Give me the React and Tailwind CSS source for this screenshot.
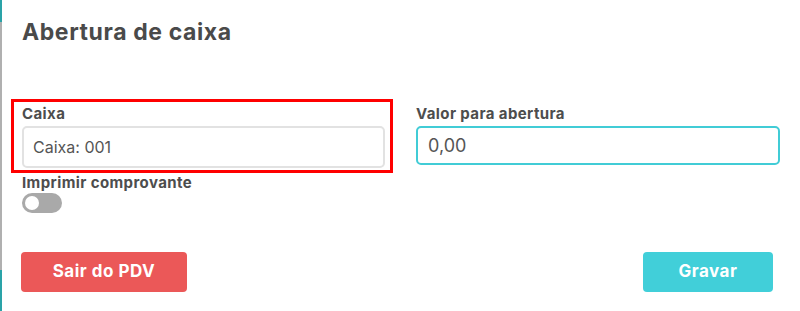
import { useState } from 'react';

const AberturaCaixa = () => {
  const [valor, setValor] = useState('0,00');
  const [imprimir, setImprimir] = useState(false);

  return (
    <div className="flex w-[800px] h-[311px] bg-white overflow-hidden" style={{ fontFamily: 'Inter, "Noto Sans", sans-serif' }}>
      {/* backdrop peeking at the left edge */}
      <div className="flex flex-col w-[2px] shrink-0">
        <div className="h-[22px] bg-[#2aa3a8]" />
        <div className="flex-1 bg-[#b0b0b0]" />
        <div className="h-[41px] bg-[#2aa3a8]" />
      </div>

      <div className="flex flex-col flex-1 pl-[9px] pr-[18px]">
        <h1 className="pl-[11px] pt-[18px] text-[23px] leading-[29px] font-bold tracking-[0.6px] text-[#4a4a4a]">
          Abertura de caixa
        </h1>

        <div className="flex mt-[52px]">
          <div className="w-[382px] border-[3px] border-[#ff0000] pl-2 pr-[5px] pb-[2px]">
            <label className="block text-[15px] leading-[21px] font-bold tracking-[0.4px] text-[#4d4d4d] pt-[1px]">Caixa</label>
            <div className="mt-[2px] h-[42px] flex items-center px-[9px] border-2 border-[#e2e2e2] rounded-[5px] text-[16px] text-[#555]">
              Caixa: 001
            </div>
          </div>

          <div className="ml-[23px] w-[364px] pt-[2px]">
            <label className="block text-[15px] leading-[21px] font-bold tracking-[0.4px] text-[#4d4d4d] pt-[2px]">Valor para abertura</label>
            <input
              value={valor}
              onChange={(e) => setValor(e.target.value)}
              className="mt-[2px] w-full h-[39px] px-[10px] border-2 border-[#41ccd6] rounded-[5px] text-[18px] text-[#555] outline-none"
            />
          </div>
        </div>

        <div className="pl-[11px]">
          <label className="block text-[15px] leading-[18px] font-bold tracking-[0.4px] text-[#4d4d4d] mt-[1px]">Imprimir comprovante</label>
          <button
            onClick={() => setImprimir(!imprimir)}
            className={`mt-[1px] flex items-center w-[40px] h-[20px] rounded-full px-[3px] ${imprimir ? 'bg-[#41cfd9] justify-end' : 'bg-[#a9a9a9] justify-start'}`}
          >
            <span className="block w-[14px] h-[14px] rounded-full bg-white" />
          </button>
        </div>

        <div className="flex justify-between items-center mt-[39px] pl-[10px] pr-[9px]">
          <button className="w-[166px] h-[40px] rounded-[4px] bg-[#eb5858] text-white text-[17px] font-bold tracking-[0.5px]">
            Sair do PDV
          </button>
          <button className="w-[130px] h-[40px] rounded-[4px] bg-[#41cfd9] text-white text-[17px] font-bold tracking-[0.5px]">
            Gravar
          </button>
        </div>
      </div>
    </div>
  );
};

export default AberturaCaixa;
